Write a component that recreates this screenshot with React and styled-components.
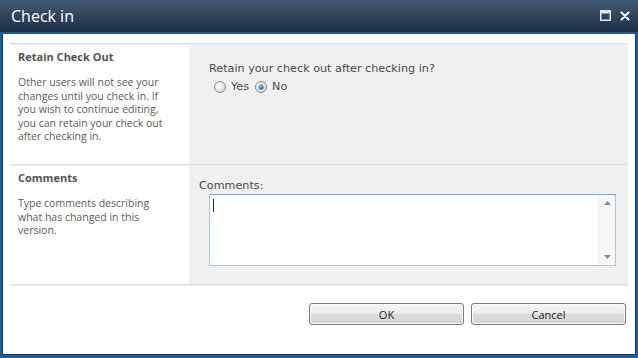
import React from "react";
import styled, { createGlobalStyle } from "styled-components";

const Global = createGlobalStyle`
  html, body { margin: 0; padding: 0; background: #ffffff; }
  * { box-sizing: border-box; }
`;

const Dialog = styled.div`
  width: 638px;
  height: 358px;
  display: flex;
  flex-direction: column;
  background: #ffffff;
  border: 2px solid #1f5d9c;
  border-top: none;
  border-bottom-width: 3px;
  box-shadow: inset 1px 0 0 #0d3a6b, inset -1px 0 0 #0d3a6b, inset 0 -1px 0 #0d3a6b;
`;

const TitleBar = styled.div`
  height: 34px;
  margin: 0 -2px;
  display: flex;
  align-items: center;
  justify-content: space-between;
  padding: 0 8px 2px 11px;
  background: linear-gradient(#46596f 0%, #2e435b 50%, #1c314a 100%);
  border-top: 1px solid #2a5c8f;
  border-bottom: 2px solid #24598f;
  color: #ffffff;
  font-family: "Open Sans", "Noto Sans", sans-serif;
  font-size: 16px;
`;

const TitleButtons = styled.div`
  display: flex;
  align-items: center;
  gap: 9px;
`;

const Body = styled.div`
  flex: 1;
  display: flex;
  flex-direction: column;
  padding: 9px 8px 0 8px;
`;

const Separator = styled.div`
  height: 2px;
  background: #dedede;
  border-bottom: 1px solid #ececec;
`;

const Section = styled.div`
  display: grid;
  grid-template-columns: 179px 1fr;
  height: ${(p) => p.$h}px;
`;

const Info = styled.div`
  padding: 4px 8px 0 8px;
  font-family: "Open Sans", "Noto Sans", sans-serif;
  color: #4c4c4c;
`;

const InfoTitle = styled.div`
  font-weight: bold;
  font-size: 11px;
  color: #525252;
  margin-bottom: 12px;
`;

const InfoText = styled.div`
  font-size: 10.5px;
  line-height: 13.5px;
  color: #5b5b5b;
  white-space: nowrap;
`;

const Field = styled.div`
  background: #f0f0f0;
  padding: ${(p) => p.$pad};
  font-family: "DejaVu Sans", Verdana, sans-serif;
  font-size: 11.2px;
  color: #4a4a4a;
`;

const Question = styled.div`
  margin-bottom: 5px;
`;

const RadioRow = styled.div`
  display: flex;
  align-items: center;
  gap: 5px;
  padding-left: 5px;
`;

const RadioLabel = styled.span`
  margin-right: 1px;
`;

const FieldLabel = styled.div`
  margin-bottom: 2px;
`;

const TextBox = styled.div`
  margin-left: 10px;
  margin-right: 12px;
  height: 72px;
  background: #ffffff;
  border: 1px solid #a9c6e2;
  border-top-color: #7ba4cf;
  display: flex;
`;

const TextArea = styled.div`
  flex: 1;
  padding: 4px 0 0 3px;
`;

const Caret = styled.div`
  width: 1px;
  height: 13px;
  background: #222;
`;

const ScrollTrack = styled.div`
  width: 17px;
  background: #f7f7f7;
  border-left: 1px solid #ececec;
  display: flex;
  flex-direction: column;
  justify-content: space-between;
  align-items: center;
  padding: 6px 0 6px;
`;

const Footer = styled.div`
  display: flex;
  justify-content: flex-end;
  gap: 7px;
  padding: 17px 2px 0 0;
`;

const Button = styled.button`
  width: 155px;
  height: 22px;
  border: 1px solid #7a7a7a;
  border-radius: 3px;
  background: linear-gradient(#f6f6f6 0%, #ebebeb 50%, #dcdcdc 51%, #d6d6d6 100%);
  box-shadow: inset 0 0 0 1px #fbfbfb;
  font-family: "Open Sans", "Noto Sans", sans-serif;
  font-size: 11px;
  color: #222;
  padding: 0;
`;

const Radio = ({ checked }) => (
  <svg width="12" height="12" viewBox="0 0 12 12">
    <defs>
      <radialGradient id={checked ? "rg1" : "rg0"} cx="0.4" cy="0.4" r="0.7">
        <stop offset="0" stopColor="#ffffff" />
        <stop offset="1" stopColor="#d4d4d4" />
      </radialGradient>
      <radialGradient id="dot" cx="0.4" cy="0.35" r="0.7">
        <stop offset="0" stopColor="#7fd0f5" />
        <stop offset="1" stopColor="#0d5a8f" />
      </radialGradient>
    </defs>
    <circle cx="6" cy="6" r="5.5" fill={`url(#${checked ? "rg1" : "rg0"})`} stroke="#8a8a8a" />
    {checked && <circle cx="6" cy="6" r="2.6" fill="url(#dot)" />}
  </svg>
);

export default function App() {
  return (
    <>
      <Global />
      <Dialog>
        <TitleBar>
          <span>Check in</span>
          <TitleButtons>
            <svg width="11" height="11" viewBox="0 0 11 11">
              <rect x="0.75" y="0.75" width="9.5" height="9.5" fill="none" stroke="#e6e6e6" strokeWidth="1.5" />
              <rect x="1" y="1" width="9" height="2.5" fill="#e6e6e6" />
            </svg>
            <svg width="10" height="10" viewBox="0 0 10 10">
              <path d="M1.5 1.5 L8.5 8.5 M8.5 1.5 L1.5 8.5" stroke="#eeeeee" strokeWidth="2.2" strokeLinecap="round" />
            </svg>
          </TitleButtons>
        </TitleBar>
        <Body>
          <Separator />
          <Section $h={119}>
            <Info>
              <InfoTitle>Retain Check Out</InfoTitle>
              <InfoText>
                Other users will not see your<br />
                changes until you check in. If<br />
                you wish to continue editing,<br />
                you can retain your check out<br />
                after checking in.
              </InfoText>
            </Info>
            <Field $pad="17px 10px 0 20px">
              <Question>Retain your check out after checking in?</Question>
              <RadioRow>
                <Radio />
                <RadioLabel>Yes</RadioLabel>
                <Radio checked />
                <RadioLabel>No</RadioLabel>
              </RadioRow>
            </Field>
          </Section>
          <Separator />
          <Section $h={118}>
            <Info>
              <InfoTitle>Comments</InfoTitle>
              <InfoText>
                Type comments describing<br />
                what has changed in this<br />
                version.
              </InfoText>
            </Info>
            <Field $pad="13px 0 0 10px">
              <FieldLabel>Comments:</FieldLabel>
              <TextBox>
                <TextArea>
                  <Caret />
                </TextArea>
                <ScrollTrack>
                  <svg width="7" height="4" viewBox="0 0 7 4"><path d="M0 4 L3.5 0 L7 4 Z" fill="#8a8a8a" /></svg>
                  <svg width="7" height="4" viewBox="0 0 7 4"><path d="M0 0 L3.5 4 L7 0 Z" fill="#8a8a8a" /></svg>
                </ScrollTrack>
              </TextBox>
            </Field>
          </Section>
          <Separator />
          <Footer>
            <Button>OK</Button>
            <Button>Cancel</Button>
          </Footer>
        </Body>
      </Dialog>
    </>
  );
}
